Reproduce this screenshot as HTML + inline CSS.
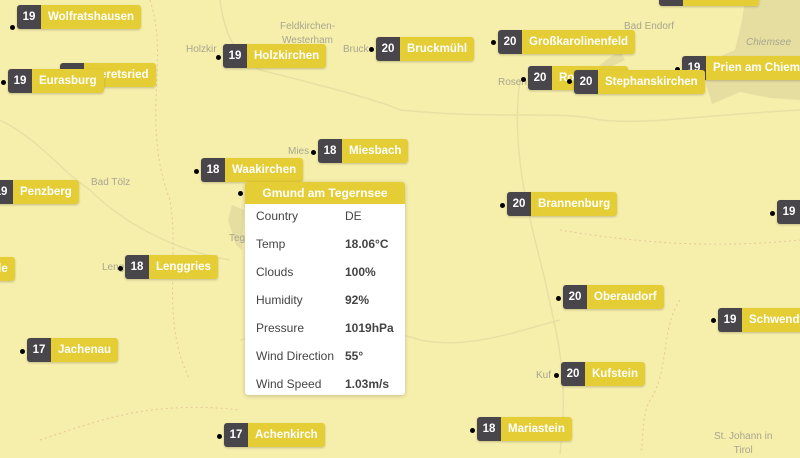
<!DOCTYPE html>
<html><head><meta charset="utf-8"><style>
*{margin:0;padding:0;box-sizing:border-box}
body{width:800px;height:454px;overflow:hidden;background:#f6eeab;font-family:"Liberation Sans",sans-serif;position:relative}
.m{position:absolute;display:flex;height:24px;border-radius:3px;overflow:hidden;box-shadow:0 1px 2px rgba(0,0,0,.2);font-weight:bold;font-size:11.5px;color:#fff;white-space:nowrap}
.m .n{background:#48464b;width:24px;text-align:center;line-height:24px}
.m .t{background:#e4cd35;padding:0 7px 0 7px;line-height:24px}
.d{position:absolute;width:5px;height:5px;border-radius:50%;background:#000}
.p{position:absolute;font-size:10px;color:#a8a690;text-align:center;line-height:14px}
.pop{position:absolute;left:245px;top:182px;width:160px;height:213px;background:#fff;border-radius:3px;box-shadow:0 1px 4px rgba(0,0,0,.2);overflow:hidden}
.pop .h{background:#e4cd35;color:#fff;font-weight:bold;font-size:12px;text-align:center;height:22px;line-height:22px}
.pop table{border-collapse:collapse;font-size:12px;color:#444;margin-left:11px;margin-top:-2px}
.pop td{height:28px;vertical-align:middle}
.pop td:first-child{width:89px}
.pop td:last-child{font-weight:bold}
</style></head><body>
<svg width="800" height="454" style="position:absolute;left:0;top:0">
<path d="M745 0 L800 0 L800 100 L770 98 L740 92 L712 104 L706 84 L712 60 L735 50 L742 20 Z" fill="#e6dea0"/>
<path d="M620 50 L600 65 L590 90 L605 70 L625 60Z" fill="#e6dea0"/>
<path d="M232 205 L228 220 L236 245 L242 250 L244 210Z" fill="#e6dea0"/>
<g fill="none" stroke="#e8e0a3" stroke-width="1.5">
<path d="M220 0 C225 40 240 60 260 70 C300 80 380 100 400 110 C500 120 560 110 600 120 C650 125 700 115 800 110"/>
<path d="M520 80 C510 150 530 220 545 280 C555 330 570 370 560 454"/>
<path d="M0 120 C40 140 60 170 90 190 C120 220 170 250 230 260"/>
<path d="M240 340 C300 330 360 320 420 340 C470 350 520 330 560 320"/>
</g>
<g fill="none" stroke="#e9c79a" stroke-width="1" stroke-dasharray="2 3">
<path d="M150 0 C170 60 140 120 170 200 C180 260 160 320 190 380"/>
<path d="M40 440 C100 420 150 400 240 410"/>
<path d="M680 300 C660 330 670 370 650 400 C640 420 645 440 640 454"/>
<path d="M560 230 C620 240 700 250 800 240"/>
</g>
</svg>
<div class="p" style="left:280px;top:20px">Feldkirchen-<br>Westerham</div>
<div class="p" style="left:186px;top:43px">Holzkir</div>
<div class="p" style="left:343px;top:43px">Bruck</div>
<div class="p" style="left:624px;top:20px">Bad Endorf</div>
<div class="p" style="left:746px;top:36px;font-style:italic">Chiemsee</div>
<div class="p" style="left:498px;top:76px">Rosen</div>
<div class="p" style="left:91px;top:176px">Bad Tölz</div>
<div class="p" style="left:288px;top:145px">Mies</div>
<div class="p" style="left:229px;top:232px">Teg</div>
<div class="p" style="left:102px;top:261px">Leng</div>
<div class="p" style="left:536px;top:369px">Kuf</div>
<div class="p" style="left:714px;top:430px">St. Johann in<br>Tirol</div>

<div class="m" style="left:659px;top:-18px"><div class="n">20</div><div class="t">Rosenheim</div></div>
<div class="d" style="left:10px;top:25px"></div>
<div class="m" style="left:17px;top:5px"><div class="n">19</div><div class="t">Wolfratshausen</div></div>
<div class="m" style="left:60px;top:63px"><div class="n">19</div><div class="t">Geretsried</div></div>
<div class="d" style="left:1px;top:80px"></div>
<div class="m" style="left:8px;top:69px"><div class="n">19</div><div class="t">Eurasburg</div></div>
<div class="d" style="left:216px;top:55px"></div>
<div class="m" style="left:223px;top:44px"><div class="n">19</div><div class="t">Holzkirchen</div></div>
<div class="d" style="left:369px;top:47px"></div>
<div class="m" style="left:376px;top:37px"><div class="n">20</div><div class="t">Bruckmühl</div></div>
<div class="d" style="left:491px;top:40px"></div>
<div class="m" style="left:498px;top:30px"><div class="n">20</div><div class="t">Großkarolinenfeld</div></div>
<div class="d" style="left:675px;top:67px"></div>
<div class="m" style="left:682px;top:56px"><div class="n">19</div><div class="t">Prien am Chiemsee</div></div>
<div class="d" style="left:521px;top:77px"></div>
<div class="m" style="left:528px;top:66px"><div class="n">20</div><div class="t">Rosenheim</div></div>
<div class="d" style="left:567px;top:79px"></div>
<div class="m" style="left:574px;top:70px"><div class="n">20</div><div class="t">Stephanskirchen</div></div>
<div class="d" style="left:311px;top:150px"></div>
<div class="m" style="left:318px;top:139px"><div class="n">18</div><div class="t">Miesbach</div></div>
<div class="d" style="left:194px;top:169px"></div>
<div class="m" style="left:201px;top:158px"><div class="n">18</div><div class="t">Waakirchen</div></div>
<div class="m" style="left:-11px;top:180px"><div class="n">19</div><div class="t">Penzberg</div></div>
<div class="d" style="left:238px;top:191px"></div>
<div class="m" style="left:300px;top:186px"><div class="n">18</div><div class="t">Gmund</div></div>
<div class="d" style="left:500px;top:203px"></div>
<div class="m" style="left:507px;top:192px"><div class="n">20</div><div class="t">Brannenburg</div></div>
<div class="d" style="left:770px;top:211px"></div>
<div class="m" style="left:777px;top:200px"><div class="n">19</div><div class="t">Bayrischzell</div></div>
<div class="m" style="left:-68px;top:257px"><div class="n">18</div><div class="t">Kochele</div></div>
<div class="d" style="left:118px;top:266px"></div>
<div class="m" style="left:125px;top:255px"><div class="n">18</div><div class="t">Lenggries</div></div>
<div class="d" style="left:556px;top:296px"></div>
<div class="m" style="left:563px;top:285px"><div class="n">20</div><div class="t">Oberaudorf</div></div>
<div class="d" style="left:711px;top:318px"></div>
<div class="m" style="left:718px;top:308px"><div class="n">19</div><div class="t">Schwendt</div></div>
<div class="d" style="left:20px;top:349px"></div>
<div class="m" style="left:27px;top:338px"><div class="n">17</div><div class="t">Jachenau</div></div>
<div class="d" style="left:554px;top:373px"></div>
<div class="m" style="left:561px;top:362px"><div class="n">20</div><div class="t">Kufstein</div></div>
<div class="d" style="left:470px;top:428px"></div>
<div class="m" style="left:477px;top:417px"><div class="n">18</div><div class="t">Mariastein</div></div>
<div class="d" style="left:217px;top:434px"></div>
<div class="m" style="left:224px;top:423px"><div class="n">17</div><div class="t">Achenkirch</div></div>

<div class="pop"><div class="h">Gmund am Tegernsee</div>
<table>
<tr><td>Country</td><td style="font-weight:normal">DE</td></tr>
<tr><td>Temp</td><td>18.06°C</td></tr>
<tr><td>Clouds</td><td>100%</td></tr>
<tr><td>Humidity</td><td>92%</td></tr>
<tr><td>Pressure</td><td>1019hPa</td></tr>
<tr><td>Wind Direction</td><td>55°</td></tr>
<tr><td>Wind Speed</td><td>1.03m/s</td></tr>
</table></div>
</body></html>
